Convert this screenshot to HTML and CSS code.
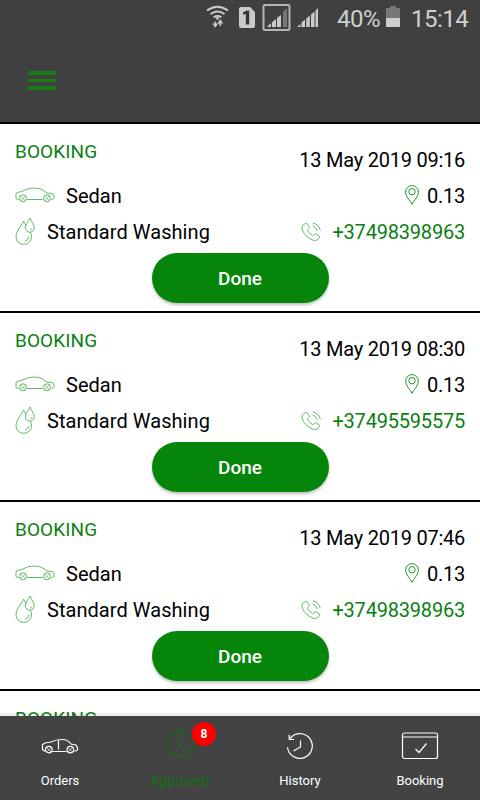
FILE: index.html
```
<!DOCTYPE html>
<html lang="en">
<head>
<meta charset="utf-8">
<title>Approved bookings</title>
<link rel="stylesheet" href="styles.css">
</head>
<body>
<svg class="defs" width="0" height="0">
  <symbol id="sedan" viewBox="0 0 40 16">
    <path d="M3.8 12.5H2.5Q1 12.5 1 10.5V7Q1 5.7 2.5 5.5L7 4.4Q13 1 18 1T27 2.5L32 6L37 6.6Q39 7.2 39 9V11.5L38 12.5H36.5M12 12.5H27.5"/>
    <circle cx="8" cy="11.3" r="3.5"/><circle cx="32" cy="11.3" r="3.5"/>
    <path d="M5.5 9L10.5 13.8M10.5 9L5.5 13.8M29.5 9L34.5 13.8M34.5 9L29.5 13.8" stroke-width=".6"/>
  </symbol>
  <symbol id="drops" viewBox="0 0 20 28">
    <path d="M8.6 4.2C6 9.5 1 14 1 20A7.7 7.3 0 0 0 16.5 20Q16.5 17.8 15.6 15.4M8.6 4.2Q9.6 6.5 11 8.3M15 1C13.6 4.5 10.3 7.2 10.3 10.8A4.4 4.4 0 0 0 19.2 10.8C19.2 7.2 16.2 4.5 15 1ZM13.7 20Q13.2 23 10 24.3M16.8 11.4Q16.5 12.7 15.2 13.2"/>
  </symbol>
  <symbol id="pin" viewBox="0 0 14 20">
    <path d="M7 19.3C5.4 15.8.6 11.5.6 7A6.4 6.4 0 0 1 13.4 7C13.4 11.5 8.6 15.8 7 19.3Z"/><circle cx="7" cy="6.7" r="3.2"/>
  </symbol>
  <symbol id="phone" viewBox="0 0 20 20">
    <path d="M4.5 1.5Q5.3 1 6 1.8L8.2 4.7Q8.8 5.6 7.9 6.4L6.7 7.6Q6.3 8.2 6.8 9Q8.7 12 11.6 13.4Q12.3 13.7 12.9 13.1L14 12Q14.6 11.4 15.5 12L18.3 14.1Q19.1 14.8 18.4 15.6L17 17.4Q15 19.5 11.5 18C6.3 15.6 3.3 12.5 1.4 8.3Q-.1 4.4 2.4 2.8ZM11.5 3.8Q15.3 5 16.2 9M11.8 .9Q18 2.2 19.3 8.5"/>
  </symbol>
</svg>

<div class="screen">
  <div class="statusbar">
    <svg class="signals" width="126" height="38" viewBox="0 0 126 38">
      <g fill="none" stroke="#cbcbcb" stroke-width="2">
        <path d="M1 10.5Q11.5 3 22 10.5M4.5 14Q11.5 8.8 18.5 14M7.7 17.3Q11.5 14.8 15.3 17.3"/>
        <path d="M9.3 27V21.5M14.3 20V26" stroke-width="1.6"/>
        <rect x="57.5" y="5" width="26" height="25" rx="1.5" stroke="#b5b5b5"/>
      </g>
      <g fill="#cbcbcb">
        <circle cx="11.5" cy="18.4" r="1.4"/>
        <path d="M6.3 23.5H12.3L9.3 27.5ZM11.3 23.5H17.3L14.3 19.5Z"/>
        <path d="M35 7H44L49 12V26Q49 28 47 28H35Q33 28 33 26V9Q33 7 35 7Z"/>
        <path d="M61 27L65 23V27ZM66 22.3L70 19V27H66ZM71 18L75 15V27H71ZM91 27L94.5 24V27ZM95.5 22.5L99 19.5V27H95.5ZM100.3 18.5L103.8 15.5V27H100.3ZM105 14.5L108.5 11.5V27H105ZM109.5 10.5L112 8V27H109.5Z"/>
        <path d="M77 12L81 8V27H77Z" fill="#777"/>
      </g>
      <path d="M37 14.5V12.3L41 10.5H43.2V24.5H39.8V14Z" fill="#363636"/>
    </svg>
    <span class="percent">40%</span>
    <svg class="battery" width="14" height="22" viewBox="0 0 14 22"><path d="M4 0H10V2H14V12H0V2H4Z" fill="#777"/><path d="M0 12H14V21H0Z" fill="#cecece"/></svg>
    <span class="clock">15:14</span>
  </div>
  <header class="toolbar"><div class="menu"><i></i><i></i><i></i></div></header>

  <main class="list">
    <article class="card">
      <div class="head"><span class="kind">BOOKING</span><time>13 May 2019 09:16</time></div>
      <div class="row"><svg class="sedan"><use href="#sedan"/></svg><span class="car">Sedan</span><svg class="pin"><use href="#pin"/></svg><span class="distance">0.13</span></div>
      <div class="row"><svg class="drops"><use href="#drops"/></svg><span class="service">Standard Washing</span><svg class="phone"><use href="#phone"/></svg><span class="number">+37498398963</span></div>
      <button>Done</button>
    </article>
    <article class="card">
      <div class="head"><span class="kind">BOOKING</span><time>13 May 2019 08:30</time></div>
      <div class="row"><svg class="sedan"><use href="#sedan"/></svg><span class="car">Sedan</span><svg class="pin"><use href="#pin"/></svg><span class="distance">0.13</span></div>
      <div class="row"><svg class="drops"><use href="#drops"/></svg><span class="service">Standard Washing</span><svg class="phone"><use href="#phone"/></svg><span class="number">+37495595575</span></div>
      <button>Done</button>
    </article>
    <article class="card">
      <div class="head"><span class="kind">BOOKING</span><time>13 May 2019 07:46</time></div>
      <div class="row"><svg class="sedan"><use href="#sedan"/></svg><span class="car">Sedan</span><svg class="pin"><use href="#pin"/></svg><span class="distance">0.13</span></div>
      <div class="row"><svg class="drops"><use href="#drops"/></svg><span class="service">Standard Washing</span><svg class="phone"><use href="#phone"/></svg><span class="number">+37498398963</span></div>
      <button>Done</button>
    </article>
    <article class="card">
      <div class="head"><span class="kind">BOOKING</span></div>
    </article>
  </main>

  <nav class="tabs">
    <div class="tab">
      <svg width="38" height="30" viewBox="0 0 38 30"><path d="M4 20.5L1.5 18.5V13.5L4 12L10 11Q15 8.5 21 8.5T30 13L35 14L36.5 17V19L33.5 20.5M11.5 20.5H25.5M17.5 9V18.5"/><circle cx="7.8" cy="18.6" r="3.3"/><circle cx="29.3" cy="18.6" r="3.3"/><path d="M5.5 16.5L10 21M10 16.5L5.5 21M27 16.5L31.5 21M31.5 16.5L27 21" stroke-width=".7"/></svg>
      <span>Orders</span>
    </div>
    <div class="tab active">
      <svg width="30" height="30" viewBox="0 0 30 30"><circle cx="15" cy="15" r="12.5" stroke-dasharray="58 2 2 2 2 2 2 2"/><path d="M14 8V15L19.5 20.5M13 .5L16.5 2.5L13.5 5"/></svg>
      <span>Approved</span>
      <b class="badge">8</b>
    </div>
    <div class="tab">
      <svg width="30" height="30" viewBox="0 0 30 30"><path d="M2.5 16.3A12.4 12.4 0 1 0 5.2 7.2M4.2 3.8V8.3H9M15.5 9.5V16L8.5 20"/></svg>
      <span>History</span>
    </div>
    <div class="tab">
      <svg width="38" height="30" viewBox="0 0 38 30"><rect x="1.5" y="2" width="35" height="25.5" rx="2"/><path d="M1.5 6H36.5M14.5 18L18 21.5L25.5 12.5"/></svg>
      <span>Booking</span>
    </div>
  </nav>
</div>
</body>
</html>
```
FILE: styles.css
```
* { box-sizing: border-box; }
body { margin: 0; font-family: Roboto, "Liberation Sans", sans-serif; background: #fff; color: #000; }
.defs { display: block; height: 0; }
.screen { width: 480px; height: 800px; display: flex; flex-direction: column; overflow: hidden; }
svg { flex: none; fill: none; }
.statusbar { height: 38px; flex: none; background: #404040; color: #cfcfcf; display: flex; align-items: center; padding-left: 206px; font-size: 24px; }
.signals { margin-right: -1px; }
.percent { width: 43px; margin-left: 6px; letter-spacing: -.5px; }
.battery { margin: -4px 11px 0 6px; }
.clock { letter-spacing: -.5px; }
.toolbar { height: 86px; flex: none; background: #404040; border-bottom: 2px solid #000; padding: 33px 28px; }
.menu { width: 28px; display: flex; flex-direction: column; gap: 4px; }
.menu i { height: 3.5px; background: #157c16; }
.list { flex: 1; min-height: 0; overflow: hidden; }
.card { height: 189px; padding: 0 15px; border-bottom: 2px solid #000; display: flex; flex-direction: column; font-size: 20px; }
.head { height: 54px; display: flex; justify-content: space-between; line-height: 24px; }
.kind { font-size: 19px; color: #0b7f12; padding-top: 16px; letter-spacing: .1px; }
.head time { padding-top: 24px; letter-spacing: -.24px; }
.row { height: 36px; display: flex; align-items: center; line-height: 24px; }
.row svg { stroke: #45ad4b; stroke-width: .85; }
.row .sedan { width: 40px; height: 16px; margin-top: -2px; }
.row .drops { width: 20px; height: 28px; margin-top: -3px; }
.row .pin { width: 14px; height: 20px; margin: -2px 8px 0 0; stroke: #229529; stroke-width: 1; }
.row .phone { width: 20px; height: 20px; margin-right: 11px; margin-top: -1px; }
.car { margin-left: 11px; margin-right: auto; }
.service { margin-left: 12px; margin-right: auto; letter-spacing: .05px; }
.distance { letter-spacing: -.24px; }
.number { color: #0b7f12; letter-spacing: -.2px; }
button { align-self: center; width: 177px; height: 50px; margin-top: 3px; border: 0; border-radius: 25px; background: #05860b; color: #fff; font: 500 19px Roboto, "Liberation Sans", sans-serif; box-shadow: 0 2px 3px rgba(0,0,0,.25); }
.tabs { height: 84px; flex: none; display: flex; background: #434343; box-shadow: 0 -3px 0 rgba(0,0,0,.06); position: relative; }
.tab { width: 120px; display: flex; flex-direction: column; align-items: center; padding-top: 15px; color: #fff; font-size: 13px; position: relative; }
.tab svg { stroke: #fff; stroke-width: 1.2; }
.tab span { margin-top: 11px; line-height: 18px; }
.active { color: #12740f; font-size: 14px; }
.active svg { stroke: #12740f; margin-top: -2px; margin-bottom: 2px; }
.badge { position: absolute; left: 72px; top: 6px; width: 24px; height: 24px; border-radius: 50%; background: #f00; color: #fff; font-size: 12px; line-height: 24px; text-align: center; }
```
